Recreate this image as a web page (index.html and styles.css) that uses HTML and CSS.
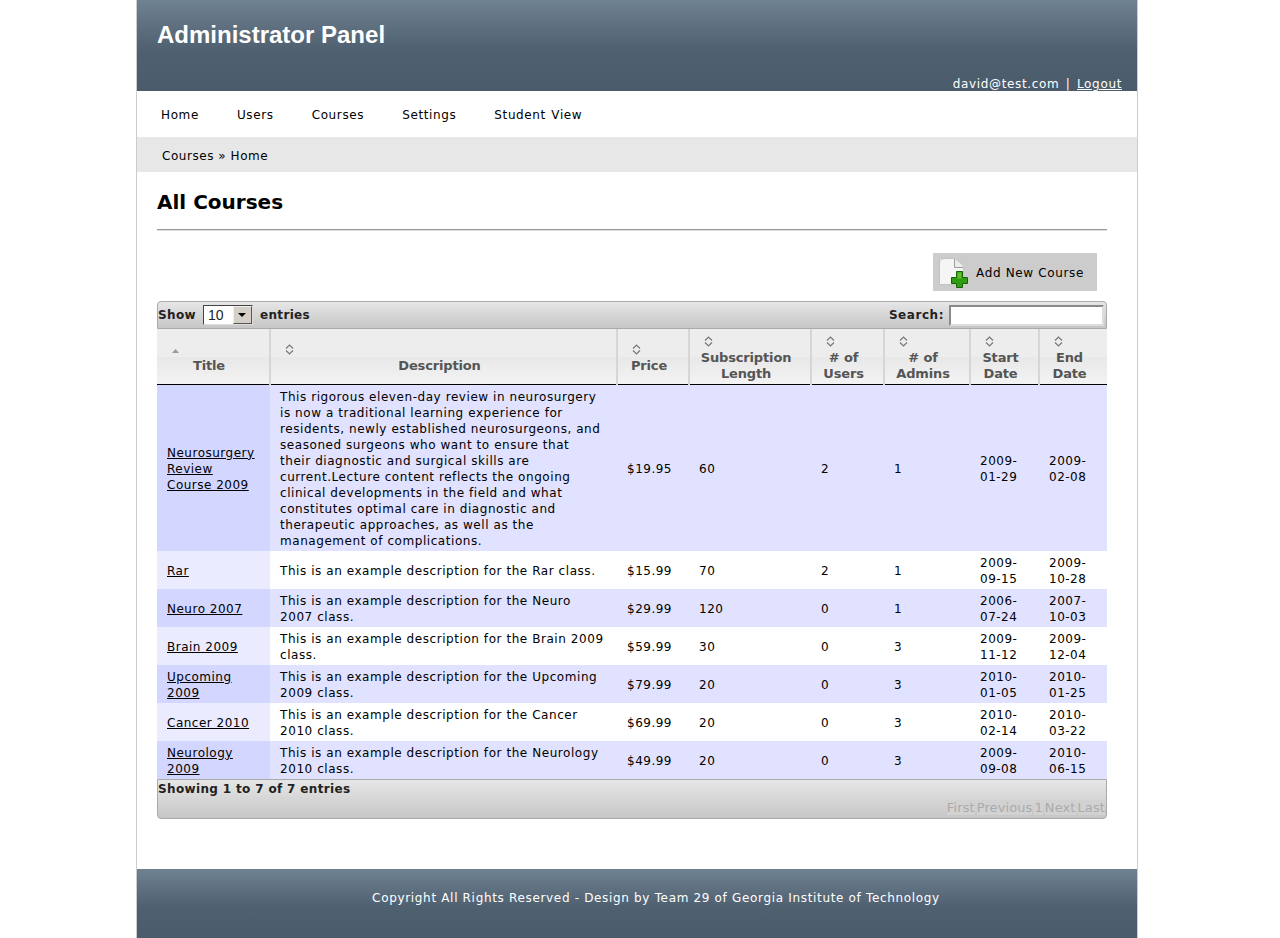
FILE: index.html
```html
<!DOCTYPE html>
<html lang="en">
<head>
    <title>Administrator Panel</title>
    <link rel="stylesheet" href="styles.css">
</head>
<body>
    <div class="wrapper">
        <div class="header">
            <h1>Administrator Panel</h1>
            <div class="user-links">david@test.com | <a href="#">Logout</a></div>
        </div>

        <div class="navbar">
            <a href="#">Home</a>
            <a href="#">Users</a>
            <a href="#">Courses</a>
            <a href="#">Settings</a>
            <a href="#">Student View</a>
        </div>

        <div class="breadcrumb">Courses » Home</div>

        <div class="content">
            <h2>All Courses</h2>

            <div class="actions">
                <a class="add-button" href="#">
                    <svg class="add-icon" width="30" height="30" viewBox="0 0 30 30">
                        <path d="M0.5 0.5H16L24.5 8V26.5H0.5Z" fill="#f5f5f5" stroke="#c4c4c4"/>
                        <path d="M1 26V6Q1 1 8 1H3Q1 1 1 4Z" fill="#d8d8d8"/>
                        <path d="M15.5 1V9.5H24" fill="#ebebeb" stroke="#9c9c9c"/>
                        <path d="M17.5 13.5H23.5V19.5H28.5V25.5H23.5V29.5H17.5V25.5H12.5V19.5H17.5Z" fill="#2f9e0e" stroke="#176408"/>
                        <path d="M18.5 14.5H22.5V20.5H18.5Z" fill="#5cc02c"/>
                    </svg>
                    Add New Course
                </a>
            </div>

            <div class="table-box">
                <div class="toolbar toolbar-top">
                    <div class="length">
                        Show
                        <span class="select-box">
                            <span class="select-value">10</span>
                            <span class="select-arrow"></span>
                        </span>
                        entries
                    </div>
                    <div class="search">Search: <input type="text"></div>
                </div>

                <table class="courses">
                    <colgroup>
                        <col class="col-title">
                        <col class="col-desc">
                        <col class="col-price">
                        <col class="col-length">
                        <col class="col-users">
                        <col class="col-admins">
                        <col class="col-start">
                        <col class="col-end">
                    </colgroup>
                    <thead>
                        <tr>
                            <th><svg class="sort" width="9" height="11" viewBox="0 0 9 11"><path d="M1 9L4.5 5L8 9Z" fill="#999"/></svg>Title</th>
                            <th><svg class="sort" width="9" height="11" viewBox="0 0 9 11"><path d="M1 4.5L4.5 1L8 4.5M1 6.5L4.5 10L8 6.5" fill="none" stroke="#777" stroke-width="1.2"/></svg>Description</th>
                            <th><svg class="sort" width="9" height="11" viewBox="0 0 9 11"><path d="M1 4.5L4.5 1L8 4.5M1 6.5L4.5 10L8 6.5" fill="none" stroke="#777" stroke-width="1.2"/></svg>Price</th>
                            <th><svg class="sort" width="9" height="11" viewBox="0 0 9 11"><path d="M1 4.5L4.5 1L8 4.5M1 6.5L4.5 10L8 6.5" fill="none" stroke="#777" stroke-width="1.2"/></svg>Subscription Length</th>
                            <th><svg class="sort" width="9" height="11" viewBox="0 0 9 11"><path d="M1 4.5L4.5 1L8 4.5M1 6.5L4.5 10L8 6.5" fill="none" stroke="#777" stroke-width="1.2"/></svg># of<br>Users</th>
                            <th><svg class="sort" width="9" height="11" viewBox="0 0 9 11"><path d="M1 4.5L4.5 1L8 4.5M1 6.5L4.5 10L8 6.5" fill="none" stroke="#777" stroke-width="1.2"/></svg># of<br>Admins</th>
                            <th><svg class="sort" width="9" height="11" viewBox="0 0 9 11"><path d="M1 4.5L4.5 1L8 4.5M1 6.5L4.5 10L8 6.5" fill="none" stroke="#777" stroke-width="1.2"/></svg>Start<br>Date</th>
                            <th><svg class="sort" width="9" height="11" viewBox="0 0 9 11"><path d="M1 4.5L4.5 1L8 4.5M1 6.5L4.5 10L8 6.5" fill="none" stroke="#777" stroke-width="1.2"/></svg>End<br>Date</th>
                        </tr>
                    </thead>
                    <tbody>
                        <tr class="odd">
                            <td class="name"><a href="#">Neurosurgery<br>Review<br>Course 2009</a></td>
                            <td class="desc">This rigorous eleven-day review in neurosurgery<br>is now a traditional learning experience for<br>residents, newly established neurosurgeons, and<br>seasoned surgeons who want to ensure that<br>their diagnostic and surgical skills are<br>current.Lecture content reflects the ongoing<br>clinical developments in the field and what<br>constitutes optimal care in diagnostic and<br>therapeutic approaches, as well as the<br>management of complications.</td>
                            <td>$19.95</td><td>60</td><td>2</td><td>1</td><td>2009-01-29</td><td>2009-02-08</td>
                        </tr>
                        <tr class="even">
                            <td class="name"><a href="#">Rar</a></td>
                            <td class="desc">This is an example description for the Rar class.</td>
                            <td>$15.99</td><td>70</td><td>2</td><td>1</td><td>2009-09-15</td><td>2009-10-28</td>
                        </tr>
                        <tr class="odd">
                            <td class="name"><a href="#">Neuro 2007</a></td>
                            <td class="desc">This is an example description for the Neuro<br>2007 class.</td>
                            <td>$29.99</td><td>120</td><td>0</td><td>1</td><td>2006-07-24</td><td>2007-10-03</td>
                        </tr>
                        <tr class="even">
                            <td class="name"><a href="#">Brain 2009</a></td>
                            <td class="desc">This is an example description for the Brain 2009<br>class.</td>
                            <td>$59.99</td><td>30</td><td>0</td><td>3</td><td>2009-11-12</td><td>2009-12-04</td>
                        </tr>
                        <tr class="odd">
                            <td class="name"><a href="#">Upcoming<br>2009</a></td>
                            <td class="desc">This is an example description for the Upcoming<br>2009 class.</td>
                            <td>$79.99</td><td>20</td><td>0</td><td>3</td><td>2010-01-05</td><td>2010-01-25</td>
                        </tr>
                        <tr class="even">
                            <td class="name"><a href="#">Cancer 2010</a></td>
                            <td class="desc">This is an example description for the Cancer<br>2010 class.</td>
                            <td>$69.99</td><td>20</td><td>0</td><td>3</td><td>2010-02-14</td><td>2010-03-22</td>
                        </tr>
                        <tr class="odd">
                            <td class="name"><a href="#">Neurology<br>2009</a></td>
                            <td class="desc">This is an example description for the Neurology<br>2010 class.</td>
                            <td>$49.99</td><td>20</td><td>0</td><td>3</td><td>2009-09-08</td><td>2010-06-15</td>
                        </tr>
                    </tbody>
                </table>

                <div class="toolbar toolbar-bottom">
                    <div class="info">Showing 1 to 7 of 7 entries</div>
                    <div class="paging">
                        <span>First</span><span>Previous</span><span>1</span><span>Next</span><span>Last</span>
                    </div>
                </div>
            </div>
        </div>

        <div class="footer">Copyright All Rights Reserved - Design by Team 29 of Georgia Institute of Technology</div>
    </div>
</body>
</html>
```

FILE: styles.css
```css
body {
    font-family: "DejaVu Sans", Verdana, sans-serif;
    font-size: 12px;
    letter-spacing: 0.5px;
    background-color: #fff;
    color: #000;
    margin: 0;
    padding: 0;
}

a {
    color: inherit;
}

.wrapper {
    width: 1000px;
    margin: 0 auto 0 136px;
    border-left: 1px solid #ccc;
    border-right: 1px solid #ccc;
    height: 938px;
    overflow: hidden;
}

.header {
    height: 91px;
    background: linear-gradient(#6f8292, #4f6070 55%, #4a5b6b);
    color: #fff;
    display: flex;
    flex-direction: column;
    justify-content: space-between;
}

.header h1 {
    font-family: "Liberation Sans", Arial, sans-serif;
    font-size: 24px;
    font-weight: bold;
    letter-spacing: 0;
    margin: 21px 0 0 20px;
    line-height: 28px;
}

.user-links {
    text-align: right;
    padding-right: 15px;
    line-height: 14px;
    letter-spacing: 0.65px;
    word-spacing: 2px;
}

.navbar {
    height: 46px;
    box-sizing: border-box;
    padding: 2px 0 0 24px;
    display: flex;
    align-items: center;
    gap: 38px;
    letter-spacing: 0.62px;
    word-spacing: 1px;
}

.navbar a {
    text-decoration: none;
}

.breadcrumb {
    height: 35px;
    line-height: 38px;
    background-color: #e7e7e7;
    padding-left: 25px;
    letter-spacing: 0.55px;
}

.content {
    padding: 0 30px 50px 20px;
}

h2 {
    font-size: 20px;
    letter-spacing: 0;
    margin: 0;
    height: 57px;
    line-height: 60px;
    border-bottom: 1px solid #999;
    box-shadow: 0 1px 0 #ddd;
}

.actions {
    display: flex;
    justify-content: flex-end;
    padding: 23px 10px 10px 0;
}

.add-button {
    width: 164px;
    height: 38px;
    box-sizing: border-box;
    background-color: #ccc;
    display: flex;
    align-items: center;
    gap: 7px;
    padding: 2px 0 0 6px;
    letter-spacing: 0.65px;
    text-decoration: none;
}

.add-icon {
    flex: none;
    margin-top: -1px;
}

.table-box {
    width: 950px;
}

.toolbar {
    font-weight: bold;
    color: #222;
    letter-spacing: 0.35px;
    box-sizing: border-box;
    border: 1px solid #aaa;
    background: linear-gradient(#e6e6e6, #c6c6c6);
}

.toolbar-top {
    height: 28px;
    border-radius: 4px 4px 0 0;
    display: flex;
    justify-content: space-between;
    align-items: center;
}

.toolbar-bottom {
    height: 40px;
    border-radius: 0 0 4px 4px;
}

.length {
    display: flex;
    align-items: center;
    gap: 7px;
}

.select-box {
    width: 50px;
    height: 20px;
    box-sizing: border-box;
    display: flex;
    background: #fff;
    border: 1px solid;
    border-color: #444 #ddd #ddd #444;
    font-family: "Liberation Sans", Arial, sans-serif;
    font-weight: normal;
    font-size: 14px;
    letter-spacing: 0;
    line-height: 18px;
}

.select-value {
    flex: 1;
    padding-left: 4px;
}

.select-arrow {
    width: 19px;
    background: #d4d0c8;
    border: 1px solid;
    border-color: #eee #555 #555 #eee;
    box-sizing: border-box;
    position: relative;
}

.select-arrow::after {
    content: "";
    position: absolute;
    left: 4px;
    top: 6px;
    border: 4px solid transparent;
    border-top: 4px solid #000;
    border-bottom: 0;
}

.search {
    display: flex;
    align-items: center;
    gap: 5px;
    padding-right: 2px;
    letter-spacing: 0.55px;
}

.search input {
    width: 155px;
    height: 21px;
    box-sizing: border-box;
    margin: 0;
    border: 2px inset #ddd;
    background: #fff;
}

.courses {
    width: 950px;
    table-layout: fixed;
    border-collapse: collapse;
}

.col-title { width: 113px; }
.col-desc { width: 347px; }
.col-price { width: 72px; }
.col-length { width: 122px; }
.col-users { width: 73px; }
.col-admins { width: 86px; }
.col-start { width: 69px; }
.col-end { width: 68px; }

.courses th {
    height: 55px;
    padding: 6px 8px 0 0;
    box-sizing: border-box;
    font-size: 13px;
    letter-spacing: -0.15px;
    line-height: 16px;
    color: #555;
    text-align: center;
    vertical-align: middle;
    background: linear-gradient(#ededed 50%, #e8e8e8 51%, #f3f3f3);
    border-left: 2px solid #d6d6d6;
    border-bottom: 1px solid #000;
}

.courses th:first-child {
    border-left: 0;
}

.sort {
    display: block;
    margin: 0 0 3px 14px;
}

.courses td {
    padding: 4px 10px 2px;
    line-height: 16px;
    vertical-align: middle;
    box-sizing: border-box;
}

.courses tbody tr {
    height: 38px;
}

.courses td.desc {
    white-space: nowrap;
    letter-spacing: 0.56px;
}

.odd td {
    background-color: #e1e2ff;
}

.even td {
    background-color: #fff;
}

.odd td.name {
    background-color: #d3d6ff;
}

.even td.name {
    background-color: #eaebff;
}

.info {
    padding-top: 1px;
    line-height: 16px;
}

.paging {
    display: flex;
    justify-content: flex-end;
    gap: 2px;
    margin-top: 3px;
    padding-right: 1px;
    font-weight: normal;
    font-size: 13px;
    letter-spacing: 0.1px;
    color: #aaa;
}

.paging span {
    background-color: #d2d2d2;
}

.footer {
    height: 69px;
    box-sizing: border-box;
    padding: 22px 0 0 38px;
    text-align: center;
    letter-spacing: 0.67px;
    color: #fff;
    background: linear-gradient(#6f8292, #4f6070 55%, #4a5b6b);
}
```
